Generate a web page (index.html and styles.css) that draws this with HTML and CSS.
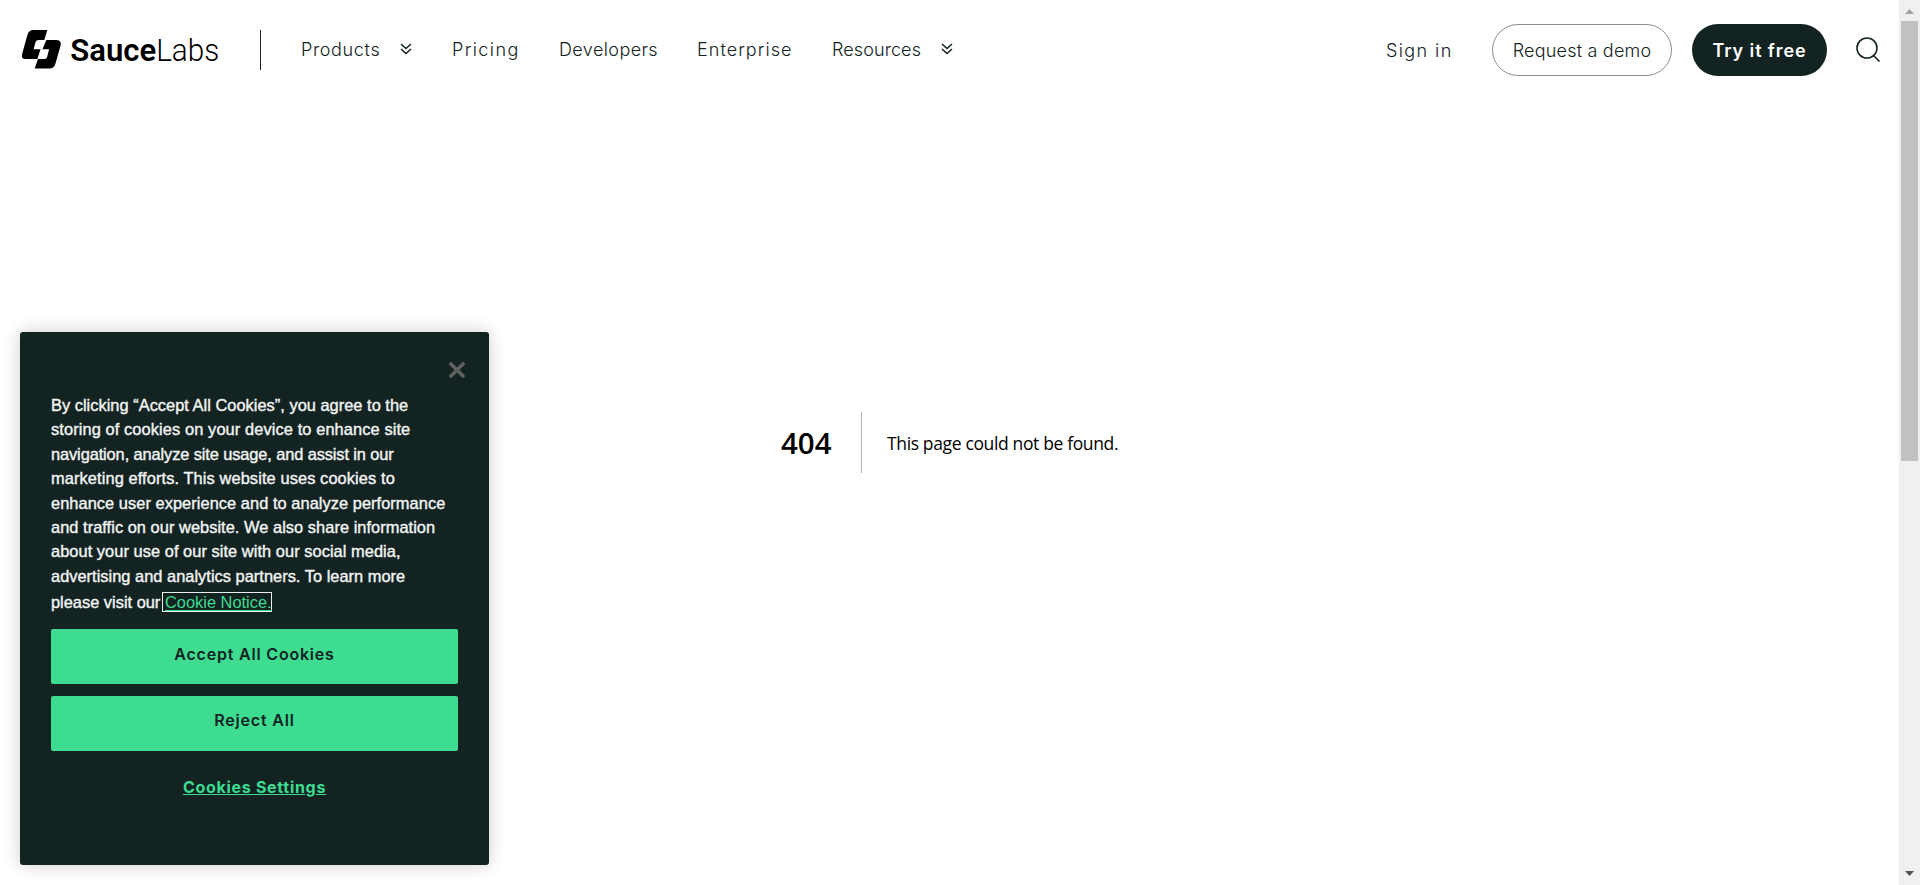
FILE: index.html
```html
<!DOCTYPE html>
<html lang="en">
<head>
<meta charset="utf-8">
<title>404: This page could not be found</title>
<link rel="stylesheet" href="styles.css">
</head>
<body>
<div class="page">
  <header class="header">
    <a class="logo" aria-label="SauceLabs">
      <svg width="210" height="40" viewBox="0 0 210 40">
        <path d="M12 0H26.3L23.3 10H17.5Q15.2 10 14.5 12.2L12.6 19.2H19.5L16.4 29H4.5Q0 29 1 24.5L6.5 4.5Q8 0 12 0Z"/>
        <path d="M25.3 10H35Q40.8 10 39.6 15.5L34.5 33.5Q33 38.6 28.5 38.6H13.7L16.9 29H23.5Q25.5 29 26.2 26.7L28.1 19.2H21.5Z"/>
        <text class="logo-bold" x="49.3" y="31" textLength="86" lengthAdjust="spacingAndGlyphs">Sauce</text>
        <text class="logo-light" x="135.2" y="31" textLength="63" lengthAdjust="spacingAndGlyphs">Labs</text>
      </svg>
    </a>
    <nav class="nav">
      <a class="products">Products</a>
      <svg class="chevron" width="12" height="12" viewBox="0 0 12 12"><path d="M1 1l5 4.5L11 1M1 6l5 4.5L11 6"/></svg>
      <a class="pricing">Pricing</a>
      <a class="developers">Developers</a>
      <a class="enterprise">Enterprise</a>
      <a class="resources">Resources</a>
      <svg class="chevron" width="12" height="12" viewBox="0 0 12 12"><path d="M1 1l5 4.5L11 1M1 6l5 4.5L11 6"/></svg>
    </nav>
    <div class="actions">
      <a class="signin">Sign in</a>
      <a class="button demo">Request a demo</a>
      <a class="button try">Try it free</a>
      <svg class="search" width="25" height="26" viewBox="0 0 25 26"><circle cx="11" cy="11" r="10"/><path d="M17.5 18.5L23.5 24.5"/></svg>
    </div>
  </header>
  <main class="error">
    <h1>404</h1>
    <p>This page could not be found.</p>
  </main>
</div>
<div class="scrollbar">
  <svg width="9" height="5" viewBox="0 0 9 5"><path fill="#a3a3a3" d="M0 5L4.5 0L9 5Z"/></svg>
  <div class="thumb"></div>
  <svg class="down" width="9" height="5" viewBox="0 0 9 5"><path fill="#505050" d="M0 0H9L4.5 5Z"/></svg>
</div>
<section class="cookies">
  <svg class="close" width="16" height="16" viewBox="0 0 16 16"><path d="M2 2L14 14M14 2L2 14"/></svg>
  <p class="notice">
    <span class="line l1">By clicking “Accept All Cookies”, you agree to the</span>
    <span class="line l2">storing of cookies on your device to enhance site</span>
    <span class="line l3">navigation, analyze site usage, and assist in our</span>
    <span class="line l4">marketing efforts. This website uses cookies to</span>
    <span class="line l5">enhance user experience and to analyze performance</span>
    <span class="line l6">and traffic on our website. We also share information</span>
    <span class="line l7">about your use of our site with our social media,</span>
    <span class="line l8">advertising and analytics partners. To learn more</span>
    <span class="line l9"><span class="visit">please visit our</span><a>Cookie Notice.</a></span>
  </p>
  <button class="accept">Accept All Cookies</button>
  <button class="reject">Reject All</button>
  <a class="settings">Cookies Settings</a>
</section>
</body>
</html>
```
FILE: styles.css
```css
* { box-sizing: border-box; }
body {
  margin: 0;
  height: 885px;
  display: flex;
  overflow: hidden;
  background: #fff;
  color: #132322;
  font-family: Inter, "Liberation Sans", sans-serif;
}
.page { flex: 1; display: flex; flex-direction: column; }
.header { height: 100px; display: flex; align-items: flex-start; padding: 30px 18px 0 21px; }
.logo {
  width: 240px;
  height: 40px;
  border-right: 1px solid #132322;
}
.logo svg { display: block; }
.logo-bold, .logo-light { font-family: Roboto, sans-serif; font-size: 31px; }
.logo-bold { font-weight: 600; }
.logo-light { font-weight: 300; }
.nav { display: flex; align-items: center; height: 38px; margin-left: 40px; font-size: 18px; font-weight: 350; white-space: nowrap; }
.nav a { margin-right: 40px; }
.nav .products { width: 79px; margin-right: 20px; letter-spacing: .65px; }
.pricing { width: 67px; letter-spacing: 1.4px; }
.developers { width: 98px; letter-spacing: .4px; }
.enterprise { width: 95px; letter-spacing: 1.05px; }
.nav .resources { width: 88px; margin-right: 21px; letter-spacing: .1px; }
.chevron { margin-right: 40px; fill: none; stroke: #132322; stroke-width: 1.6; }
.actions { display: flex; margin-left: auto; margin-top: -6px; height: 52px; align-items: center; font-size: 18px; font-weight: 350; white-space: nowrap; }
.signin { width: 66px; margin-right: 40px; letter-spacing: 1.4px; }
.button { height: 52px; border-radius: 26px; display: flex; align-items: center; justify-content: center; }
.demo { width: 180px; border: 1px solid #8a9190; margin-right: 20px; letter-spacing: .2px; }
.try { width: 135px; background: #132322; color: #fff; font-weight: 600; margin-right: 29px; letter-spacing: .9px; }
.search { fill: none; stroke: #132322; stroke-width: 1.6; }
.error {
  display: flex;
  align-items: center;
  height: 61px;
  margin: 312px 0 0 781px;
  color: #000;
  font-family: "Open Sans", sans-serif;
}
.error h1 {
  width: 81px;
  height: 61px;
  margin: 0 25px 0 0;
  border-right: 1px solid #b3b3b3;
  font-size: 29.5px;
  font-weight: 600;
  line-height: 62px;
}
.error p { margin: 0; font-size: 17.5px; letter-spacing: -.36px; }
.scrollbar { width: 21px; background: #f0f0f0; display: flex; flex-direction: column; padding: 9px 2px 9px; }
.scrollbar svg { align-self: center; }
.thumb { height: 440px; margin-top: 7px; background: #c1c1c1; }
.down { margin-top: auto; }
.cookies {
  position: absolute;
  left: 20px;
  top: 332px;
  width: 469px;
  height: 533px;
  padding: 30px 31px 0;
  display: flex;
  flex-direction: column;
  border-radius: 3px;
  background: #132322;
  box-shadow: 0 0 18px rgba(0, 0, 0, .2);
  color: #f2f4f3;
  font-family: "Liberation Sans", sans-serif;
}
.close { align-self: flex-end; margin-right: -7px; flex: none; fill: none; stroke: #5f6060; stroke-width: 3.6; stroke-linecap: round; }
.notice { margin: 15px 0 14px; font-size: 16.4px; line-height: 24.4px; -webkit-text-stroke: .4px; }
.line { display: block; white-space: nowrap; }
.l1 { letter-spacing: .02px; }
.l2 { letter-spacing: .1px; }
.l3 { letter-spacing: -.11px; }
.l4 { letter-spacing: .1px; }
.l5 { letter-spacing: .05px; }
.l6 { letter-spacing: .04px; }
.l7 { letter-spacing: .05px; }
.l8 { letter-spacing: .02px; }
.l9 { display: flex; align-items: center; height: 27px; }
.visit { width: 111px; }
.l9 a { width: 110px; height: 20px; padding-left: 2px; border: 1px solid #e8efec; color: #3ddc91; line-height: 18px; text-decoration: underline; text-underline-offset: 2px; -webkit-text-stroke: 0; }
.cookies button, .settings {
  font-family: Inter, sans-serif;
  font-size: 16px;
  font-weight: 600;
  letter-spacing: .8px;
}
.cookies button { height: 55px; margin: 0 0 12px; padding: 0 0 5px; border: 0; border-radius: 2px; background: #3ddc91; color: #132322; }
.cookies .reject { padding-bottom: 7px; }
.settings { margin-top: 14px; align-self: center; color: #3ddc91; text-decoration: underline; font-weight: 700; letter-spacing: .7px; }
```
